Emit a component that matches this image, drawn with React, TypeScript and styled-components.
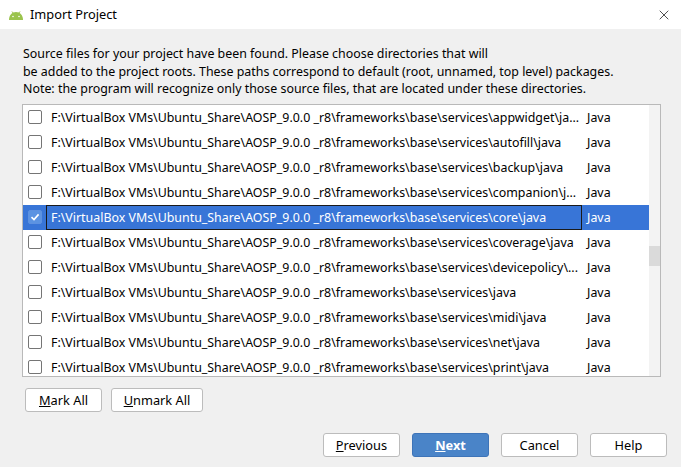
import React from 'react';
import styled, { createGlobalStyle } from 'styled-components';
import { X } from 'lucide-react';

const GlobalStyle = createGlobalStyle`
  html, body {
    margin: 0;
    padding: 0;
    background: #f0f0f0;
  }
  body {
    font-family: "Noto Sans", "Open Sans", "Liberation Sans", sans-serif;
    font-size: 12.4px;
    color: #000;
  }
`;

const PREFIX = 'F:\\VirtualBox VMs\\Ubuntu_Share\\AOSP_9.0.0 _r8\\frameworks\\base\\services\\';

const rows = [
  { path: 'appwidget\\ja...', checked: false },
  { path: 'autofill\\java', checked: false },
  { path: 'backup\\java', checked: false },
  { path: 'companion\\j...', checked: false },
  { path: 'core\\java', checked: true },
  { path: 'coverage\\java', checked: false },
  { path: 'devicepolicy\\...', checked: false },
  { path: 'java', checked: false },
  { path: 'midi\\java', checked: false },
  { path: 'net\\java', checked: false },
  { path: 'print\\java', checked: false },
];

const Window = styled.div`
  width: 681px;
  height: 467px;
  display: flex;
  flex-direction: column;
  background: #f0f0f0;
  overflow: hidden;
`;

const TitleBar = styled.div`
  height: 29px;
  background: #fff;
  display: flex;
  align-items: center;
  padding: 0 0 0 8px;
  gap: 6px;
`;

const Title = styled.div`
  flex: 1;
  font-size: 12.8px;
  margin-top: -1px;
`;

const CloseButton = styled.div`
  width: 30px;
  height: 29px;
  display: flex;
  align-items: center;
  justify-content: center;
  margin-right: 2px;
  color: #222;
`;

const Body = styled.div`
  flex: 1;
  display: flex;
  flex-direction: column;
  padding: 16px 20px 10px 22px;
`;

const Intro = styled.p`
  margin: 0 0 0 1px;
  line-height: 17.5px;
`;

const ListBox = styled.div`
  margin-top: 6px;
  height: 271px;
  border: 1px solid #b9b9b9;
  background: #fff;
  display: flex;
  overflow: hidden;
`;

const Rows = styled.div`
  flex: 1;
  display: flex;
  flex-direction: column;
`;

const Row = styled.div<{ $selected: boolean }>`
  height: 25px;
  flex: none;
  display: flex;
  align-items: center;
  background: ${(p) => (p.$selected ? '#3875d7' : '#fff')};
  color: ${(p) => (p.$selected ? '#fff' : '#000')};
`;

const CheckCell = styled.div`
  width: 23px;
  display: flex;
  justify-content: flex-end;
`;

const Box = styled.div<{ $checked: boolean }>`
  width: 12px;
  height: 12px;
  border: 1px solid ${(p) => (p.$checked ? '#5d91e0' : '#757575')};
  border-radius: 2px;
  background: ${(p) => (p.$checked ? '#5b93e2' : '#fff')};
  display: flex;
  align-items: center;
  justify-content: center;
  margin-right: 4px;
`;

const PathCell = styled.div<{ $focused: boolean }>`
  width: 536px;
  height: 25px;
  box-sizing: border-box;
  padding-left: 4px;
  display: flex;
  align-items: center;
  white-space: nowrap;
  overflow: hidden;
  border: 1px solid ${(p) => (p.$focused ? '#1a1a1a' : 'transparent')};
`;

const TypeCell = styled.div`
  flex: 1;
  padding-left: 4px;
  margin-left: 1px;
  height: 25px;
  display: flex;
  align-items: center;
`;

const ScrollTrack = styled.div`
  width: 11px;
  background: #f3f3f3;
  position: relative;
`;

const ScrollThumb = styled.div`
  position: absolute;
  left: 0;
  right: 0;
  top: 141px;
  height: 20px;
  background: #dadada;
`;

const ButtonRow = styled.div<{ $end?: boolean }>`
  display: flex;
  gap: ${(p) => (p.$end ? '12px' : '9px')};
  justify-content: ${(p) => (p.$end ? 'flex-end' : 'flex-start')};
  margin-top: ${(p) => (p.$end ? 'auto' : '11px')};
  padding-left: ${(p) => (p.$end ? '0' : '3px')};
  margin-right: ${(p) => (p.$end ? '-6px' : '0')};
`;

const Button = styled.button<{ $primary?: boolean; $w?: number }>`
  width: ${(p) => p.$w ?? 77}px;
  height: 24px;
  border-radius: 3px;
  border: 1px solid ${(p) => (p.$primary ? '#3e74b8' : '#bcbcbc')};
  background: ${(p) => (p.$primary ? '#4a84c8' : '#fff')};
  color: ${(p) => (p.$primary ? '#fff' : '#000')};
  font-family: inherit;
  font-size: 12.8px;
  font-weight: ${(p) => (p.$primary ? 700 : 400)};
  padding: 0;
  display: flex;
  align-items: center;
  justify-content: center;
`;

const Mnemonic = styled.span`
  text-decoration: underline;
`;

const AndroidIcon = () => (
  <svg width="16" height="10" viewBox="0 0 16 10">
    <path d="M1 10 C1 5 4 2 8 2 C12 2 15 5 15 10 Z" fill="#9bc44d" />
    <line x1="4" y1="1.5" x2="5.5" y2="3.5" stroke="#9bc44d" strokeWidth="1" />
    <line x1="12" y1="1.5" x2="10.5" y2="3.5" stroke="#9bc44d" strokeWidth="1" />
    <circle cx="5" cy="6.5" r="0.8" fill="#fff" />
    <circle cx="11" cy="6.5" r="0.8" fill="#fff" />
  </svg>
);

const Check = () => (
  <svg width="10" height="10" viewBox="0 0 10 10">
    <path d="M1.5 5.2 L4 7.6 L8.6 2.4" fill="none" stroke="#fff" strokeWidth="1.6" />
  </svg>
);

export default function App() {
  return (
    <Window>
      <GlobalStyle />
      <TitleBar>
        <AndroidIcon />
        <Title>Import Project</Title>
        <CloseButton>
          <X size={16} strokeWidth={1.2} />
        </CloseButton>
      </TitleBar>
      <Body>
        <Intro>
          Source files for your project have been found. Please choose directories that will
          <br />
          be added to the project roots. These paths correspond to default (root, unnamed, top level) packages.
          <br />
          Note: the program will recognize only those source files, that are located under these directories.
        </Intro>
        <ListBox>
          <Rows>
            {rows.map((r) => (
              <Row key={r.path} $selected={r.checked}>
                <CheckCell>
                  <Box $checked={r.checked}>{r.checked && <Check />}</Box>
                </CheckCell>
                <PathCell $focused={r.checked}>{PREFIX + r.path}</PathCell>
                <TypeCell>Java</TypeCell>
              </Row>
            ))}
          </Rows>
          <ScrollTrack>
            <ScrollThumb />
          </ScrollTrack>
        </ListBox>
        <ButtonRow>
          <Button>
            <Mnemonic>M</Mnemonic>ark All
          </Button>
          <Button $w={92}>
            <Mnemonic>U</Mnemonic>nmark All
          </Button>
        </ButtonRow>
        <ButtonRow $end>
          <Button>
            <Mnemonic>P</Mnemonic>revious
          </Button>
          <Button $primary>
            <Mnemonic>N</Mnemonic>ext
          </Button>
          <Button>Cancel</Button>
          <Button>Help</Button>
        </ButtonRow>
      </Body>
    </Window>
  );
}
